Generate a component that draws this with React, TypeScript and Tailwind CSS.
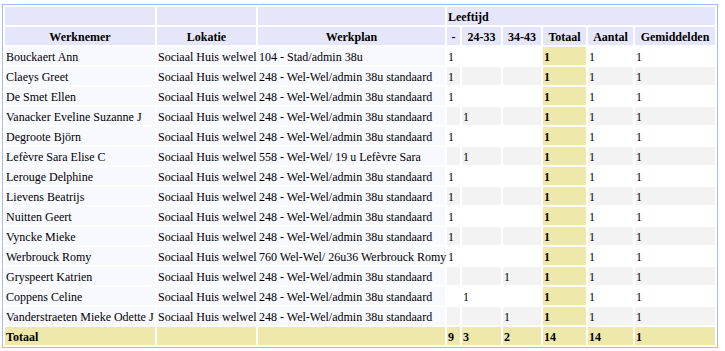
type Row = {
  naam: string;
  plan: string;
  age: 0 | 1 | 2;
};

const PLAN = "248 - Wel-Wel/admin 38u standaard";

const rows: Row[] = [
  { naam: "Bouckaert Ann", plan: "104 - Stad/admin 38u", age: 0 },
  { naam: "Claeys Greet", plan: PLAN, age: 0 },
  { naam: "De Smet Ellen", plan: PLAN, age: 0 },
  { naam: "Vanacker Eveline Suzanne J", plan: PLAN, age: 1 },
  { naam: "Degroote Björn", plan: PLAN, age: 0 },
  { naam: "Lefèvre Sara Elise C", plan: "558 - Wel-Wel/ 19 u Lefèvre Sara", age: 1 },
  { naam: "Lerouge Delphine", plan: PLAN, age: 0 },
  { naam: "Lievens Beatrijs", plan: PLAN, age: 0 },
  { naam: "Nuitten Geert", plan: PLAN, age: 0 },
  { naam: "Vyncke Mieke", plan: PLAN, age: 0 },
  { naam: "Werbrouck Romy", plan: "760 Wel-Wel/ 26u36 Werbrouck Romy", age: 0 },
  { naam: "Gryspeert Katrien", plan: PLAN, age: 2 },
  { naam: "Coppens Celine", plan: PLAN, age: 1 },
  { naam: "Vanderstraeten Mieke Odette J", plan: PLAN, age: 2 },
];

const th = "h-[18px] p-0 pt-[2px] px-[1px] bg-[#e6e6fa] font-bold text-center whitespace-nowrap";
const td = "h-[18px] p-0 pt-[2px] px-[1px] text-left whitespace-nowrap";
const gold = "bg-[#eee8aa]";

export default function App() {
  return (
    <div className="pl-[2px] pt-[4px] bg-white min-h-screen font-['Liberation_Serif',serif] text-[12px] leading-[16px] text-black">
      <table className="table-fixed w-[716px] border-separate border-spacing-[2px] border border-[#a4bdf3]">
        <colgroup>
          <col className="w-[150px]" />
          <col className="w-[99px]" />
          <col className="w-[187px]" />
          <col className="w-[13px]" />
          <col className="w-[39px]" />
          <col className="w-[38px]" />
          <col className="w-[43px]" />
          <col className="w-[45px]" />
          <col className="w-[80px]" />
        </colgroup>
        <thead>
          <tr>
            <th className={th}></th>
            <th className={th}></th>
            <th className={th}></th>
            <th colSpan={6} className={th + " !text-left"}>
              Leeftijd
            </th>
          </tr>
          <tr>
            <th className={th}>Werknemer</th>
            <th className={th}>Lokatie</th>
            <th className={th}>Werkplan</th>
            <th className={th}>-</th>
            <th className={th}>24-33</th>
            <th className={th}>34-43</th>
            <th className={th}>Totaal</th>
            <th className={th}>Aantal</th>
            <th className={th}>Gemiddelden</th>
          </tr>
        </thead>
        <tbody>
          {rows.map((r, i) => {
            const alt = i % 2 === 1 ? "bg-[#f3f3f3]" : "bg-white";
            return (
              <tr key={r.naam}>
                <td className={td + " bg-[#f8f8ff]"}>{r.naam}</td>
                <td className={td + " bg-[#f8f8ff]"}>Sociaal Huis welwel</td>
                <td className={td + " bg-[#f8f8ff]"}>{r.plan}</td>
                <td className={td + " " + alt}>{r.age === 0 ? "1" : ""}</td>
                <td className={td + " " + alt}>{r.age === 1 ? "1" : ""}</td>
                <td className={td + " " + alt}>{r.age === 2 ? "1" : ""}</td>
                <td className={td + " font-bold " + gold}>1</td>
                <td className={td + " " + alt}>1</td>
                <td className={td + " " + alt}>1</td>
              </tr>
            );
          })}
          <tr>
            <td className={td + " font-bold " + gold}>Totaal</td>
            <td className={td + " " + gold}></td>
            <td className={td + " " + gold}></td>
            <td className={td + " font-bold " + gold}>9</td>
            <td className={td + " font-bold " + gold}>3</td>
            <td className={td + " font-bold " + gold}>2</td>
            <td className={td + " font-bold " + gold}>14</td>
            <td className={td + " font-bold " + gold}>14</td>
            <td className={td + " font-bold " + gold}>1</td>
          </tr>
        </tbody>
      </table>
    </div>
  );
}
